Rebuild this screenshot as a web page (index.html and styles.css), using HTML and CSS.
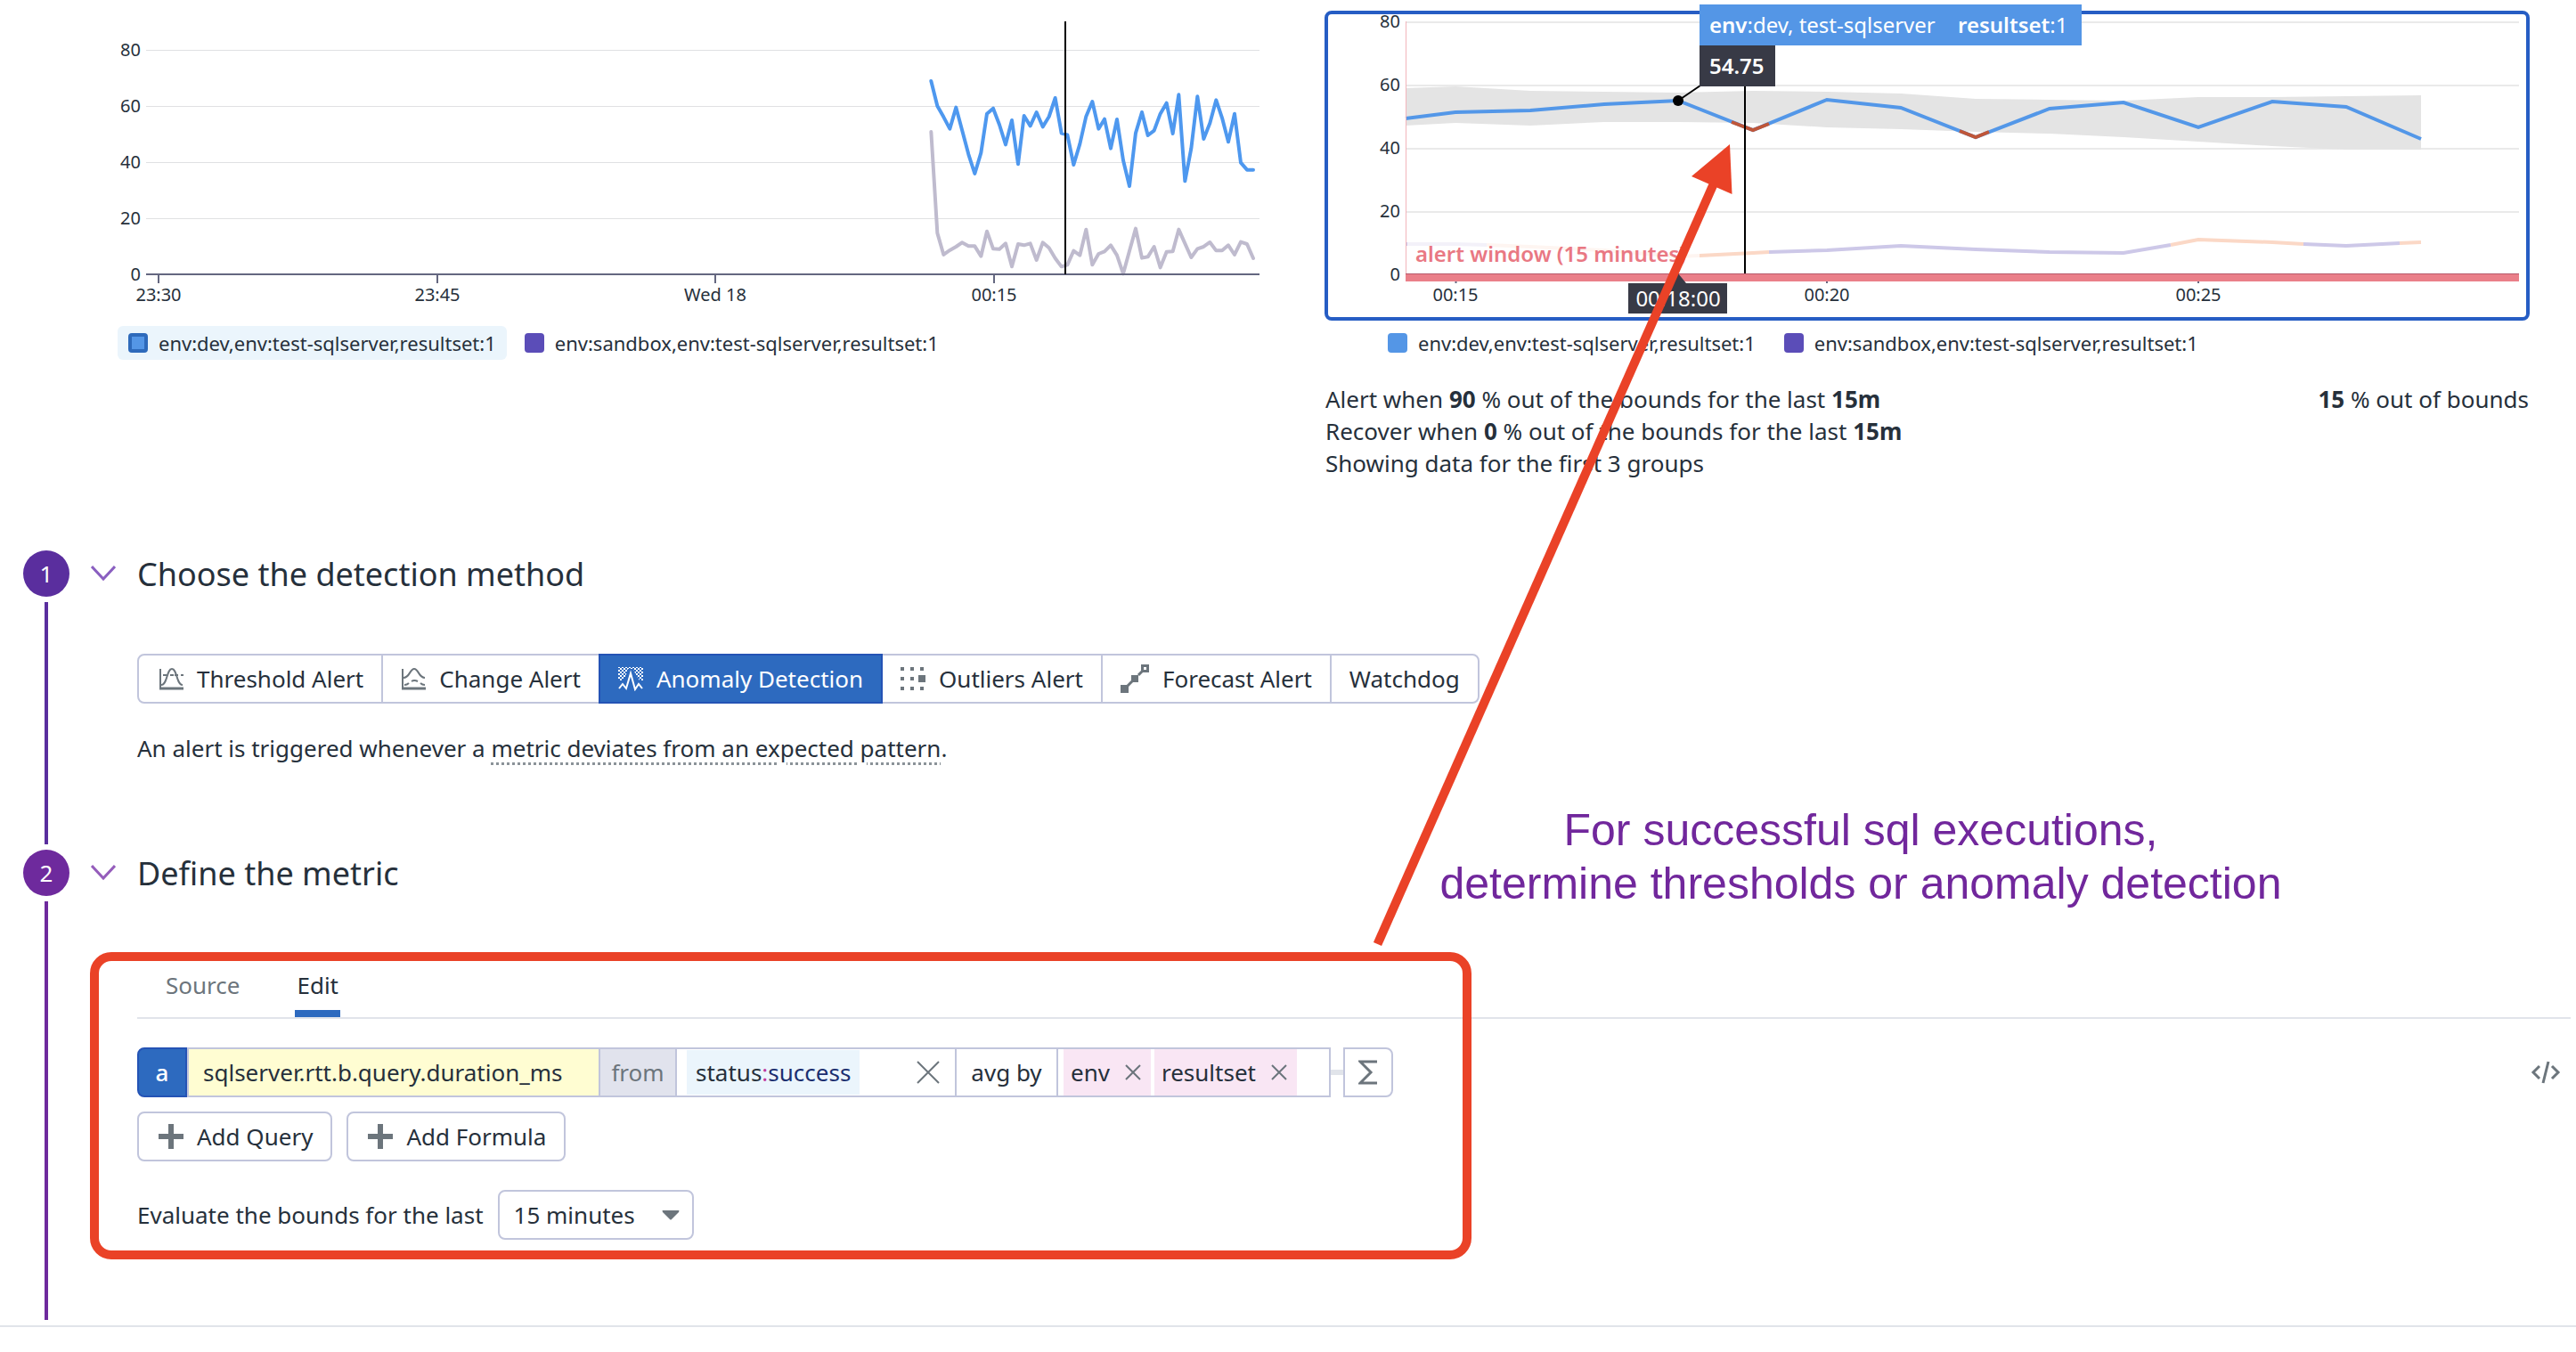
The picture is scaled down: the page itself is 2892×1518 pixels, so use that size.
FILE: index.html
```html
<!DOCTYPE html>
<html lang="en">
<head>
<meta charset="utf-8">
<title>Edit monitor</title>
<link rel="stylesheet" href="styles.css">
</head>
<body>
<main class="page">
  <section class="charts">
    <div class="chart-col">
      <svg class="chart history" viewBox="132 0 1286 366" role="img" aria-label="Query duration history">
        <g class="grid thin">
          <path d="M164 56.5H1414M164 119.5H1414M164 182.5H1414M164 245.5H1414"/>
        </g>
        <g class="lines">
          <g transform="translate(980 0) scale(.33333)">
            <polyline class="series-muted" points="196,444 217,785 238,858 259,843 280,831 300,817 322,829 343,829 364,863 384,779 405,838 426,839 447,820 468,898 489,822 509,826 530,820 551,876 572,817 593,835 614,870 635,898 655,892 676,845 697,860 718,773 739,892 760,855 780,847 801,826 822,860 843,922 864,845 885,770 906,869 926,865 947,831 968,901 989,848 1010,847 1030,773 1051,820 1072,867 1093,838 1114,831 1135,816 1156,844 1176,844 1197,826 1218,858 1239,815 1260,822 1281,870"/>
            <polyline class="series-blue" points="196,273 217,357 238,394 259,434 280,362 300,437 322,520 343,585 364,515 384,383 405,365 426,420 447,487 468,405 489,553 509,390 530,424 551,378 572,427 593,393 614,330 635,449 655,454 676,555 697,485 718,392 739,342 760,434 780,401 801,500 822,402 843,540 864,627 885,448 906,378 926,456 947,440 968,383 989,347 1010,450 1030,319 1051,610 1072,500 1093,325 1114,468 1135,415 1156,337 1176,397 1197,478 1218,383 1239,548 1260,572 1281,572"/>
          </g>
        </g>
        <path class="axis" d="M164 308H1414M178 308V318M491 308V318M803 308V318M1116 308V318"/>
        <path class="cursor" d="M1196 24V308"/>
        <g class="labels y">
          <text x="158" y="63">80</text><text x="158" y="126">60</text><text x="158" y="189">40</text><text x="158" y="252">20</text><text x="158" y="315">0</text>
        </g>
        <g class="labels x">
          <text x="178" y="338">23:30</text><text x="491" y="338">23:45</text><text x="803" y="338">Wed 18</text><text x="1116" y="338">00:15</text>
        </g>
      </svg>
      <ul class="legend">
        <li class="selected"><span class="swatch blue"></span>env:dev,env:test-sqlserver,resultset:1</li>
        <li><span class="swatch purple"></span>env:sandbox,env:test-sqlserver,resultset:1</li>
      </ul>
    </div>

    <div class="chart-col">
      <div class="panel">
        <svg class="chart" viewBox="1491 16 1345 340" role="img" aria-label="Alert window preview">
          <path class="grid thick" d="M1578 25H2828M1578 96H2828M1578 167H2828M1578 238H2828"/>
          <path class="band" d="M1578 99L1634 97 1718 102 1801 103 1884 104 1968 102 2051 103 2134 105 2218 111 2301 112 2384 113 2468 109 2551 109 2634 108 2718 107V168H2634L2551 164 2468 159 2384 154 2301 150 2218 148 2134 145 2051 143 1968 138 1884 137 1801 137 1718 141 1634 138 1578 141Z"/>
          <path class="low" d="M1578 274H1634L1669 275M1986 283L2051 281 2134 276 2218 280 2301 283 2384 284 2437 275M2586 274L2634 276 2694 273"/>
          <path class="low warn" d="M1669 275L1718 277 1801 281 1884 288 1908 287 1968 284 1986 283M2437 275L2468 269 2551 272 2586 274M2694 273L2718 272"/>
          <path class="main" d="M1578 133L1634 126 1718 124 1801 117 1884 113 1968 146 2051 112 2134 121 2218 154 2301 122 2384 115 2468 143 2551 114 2634 120 2718 156"/>
          <path class="main breach" d="M1944 137L1968 146 1986 139M2200 147L2218 154 2233 148"/>
          <rect class="veil" x="1580" y="266" width="328" height="40"/>
          <path class="window-edge" d="M1578.5 24V307"/>
          <path class="axis-nub" d="M1634.500 316V318M2051 316V318M2468 316V318"/>
          <rect class="window-bar" x="1578" y="307" width="1250" height="9"/>
          <rect class="window-line" x="1578" y="307" width="1250" height="1"/>
          <text class="window-label" x="1589" y="294">alert window (15 minutes)</text>
          <path class="cursor" d="M1959 97V307"/>
          <path class="cursor" d="M1884 113L1909 96"/>
          <circle cx="1884" cy="113" r="6"/>
          <g class="labels y">
            <text x="1572" y="31">80</text><text x="1572" y="102">60</text><text x="1572" y="173">40</text><text x="1572" y="244">20</text><text x="1572" y="315">0</text>
          </g>
          <g class="labels x">
            <text x="1634" y="338">00:15</text><text x="2051" y="338">00:20</text><text x="2468" y="338">00:25</text>
          </g>
          <rect class="tip-blue" x="1908" y="5" width="429" height="46"/>
          <path class="tip-dark" d="M1908 51H1993V97H1908ZM1828 318H1875L1884 307 1893 318H1939V352H1828Z"/>
          <g class="tip-text">
            <text x="1919" y="37"><tspan class="b">env</tspan>:dev, test-sqlserver</text>
            <text x="2198" y="37"><tspan class="b">resultset</tspan>:1</text>
            <text class="b" x="1919" y="83">54.75</text>
            <text x="1884" y="344" text-anchor="middle">00:18:00</text>
          </g>
        </svg>
      </div>
      <ul class="legend inset">
        <li><span class="swatch blue"></span>env:dev,env:test-sqlserver,resultset:1</li>
        <li><span class="swatch purple"></span>env:sandbox,env:test-sqlserver,resultset:1</li>
      </ul>
      <div class="summary">
        <div>
          <p>Alert when <b>90</b> % out of the bounds for the last <b>15m</b></p>
          <p>Recover when <b>0</b> % out of the bounds for the last <b>15m</b></p>
          <p>Showing data for the first 3 groups</p>
        </div>
        <p><b>15</b> % out of bounds</p>
      </div>
    </div>
  </section>

  <section class="step first">
    <div class="rail"><span class="num">1</span><span class="line"></span></div>
    <div class="body">
      <header>
        <svg class="chev" viewBox="0 0 28 20"><path d="M1 2L14 16 27 2"/></svg>
        <h2>Choose the detection method</h2>
      </header>
      <div class="content">
        <div class="methods">
          <button type="button"><svg class="icon" viewBox="0 0 28 28"><path class="ax" d="M2 3V24"/><path class="base" d="M1 25H28"/><path class="ln" d="M3 21C10 21 9 3 15 3S20 21 27 21"/><path class="ln" d="M5 10H9M13 10H17M18 10H22M25 10H28"/></svg>Threshold Alert</button>
          <button type="button"><svg class="icon" viewBox="0 0 28 28"><path class="ax" d="M2 3V24"/><path class="base" d="M1 25H28"/><path class="ln" d="M3 13C10 13 10 3 15 3S20 13 27 13"/><path class="ln" d="M4 21Q7 21 9 19M12 17Q15 15 19 17M22 19Q24 21 27 21"/></svg>Change Alert</button>
          <button type="button" class="on"><svg class="icon" viewBox="0 0 28 28"><defs><pattern id="chk" width="4" height="4" patternUnits="userSpaceOnUse"><path d="M0 0H2V2H0ZM2 2H4V4H2Z"/></pattern></defs><path class="chk" d="M0 1H28V16H24L20 10 17 3H11L8 12 4 16H0Z"/><path class="ln" d="M1 25L5 20 9 25 14 8 19 26 23 20 27 25"/></svg>Anomaly Detection</button>
          <button type="button"><svg class="icon fill" viewBox="0 0 28 28"><path d="M0 1H4V5H0ZM11 1H15V5H11ZM22 1H26V5H22ZM0 12H4V16H0ZM11 12H15V16H11ZM20 10H28V18H20ZM0 23H4V27H0ZM11 23H15V27H11ZM22 23H26V27H22Z"/></svg>Outliers Alert</button>
          <button type="button"><svg class="icon wide fill" viewBox="0 0 32 32"><path d="M0 23H9V32H0ZM12 12H20V20H12Z"/><path class="ln" d="M6 26L15 17M20 12L25 7"/><path class="sq" d="M24.500 1.500H30.500V7.500H24.500Z"/></svg>Forecast Alert</button>
          <button type="button">Watchdog</button>
        </div>
        <p class="desc">An alert is triggered whenever a <span class="hint">metric deviates from an expected pattern</span>.</p>
      </div>
    </div>
  </section>

  <section class="step second">
    <div class="rail"><span class="num">2</span><span class="line"></span></div>
    <div class="body">
      <header>
        <svg class="chev" viewBox="0 0 28 20"><path d="M1 2L14 16 27 2"/></svg>
        <h2>Define the metric</h2>
      </header>
      <div class="content metric">
        <nav class="tabs"><a href="#source">Source</a><a href="#edit" class="on">Edit</a></nav>
        <div class="query">
          <button type="button" class="cell letter">a</button>
          <input class="cell name" type="text" aria-label="Metric" value="sqlserver.rtt.b.query.duration_ms">
          <span class="cell from">from</span>
          <div class="cell filter"><span class="tag">status<i>:</i><em>success</em></span><button type="button" class="x" aria-label="Clear filter"><svg width="26" height="26" viewBox="0 0 26 26"><path d="M1 1L25 25M25 1L1 25"/></svg></button></div>
          <button type="button" class="cell agg">avg by</button>
          <div class="cell groups">
            <span class="group">env<button type="button" class="x" aria-label="Remove env"><svg width="18" height="18" viewBox="0 0 18 18"><path d="M1 1L17 17M17 1L1 17"/></svg></button></span>
            <span class="group">resultset<button type="button" class="x" aria-label="Remove resultset"><svg width="18" height="18" viewBox="0 0 18 18"><path d="M1 1L17 17M17 1L1 17"/></svg></button></span>
          </div>
          <span class="link"></span>
          <button type="button" class="cell sigma" aria-label="Add function"><svg width="22" height="28" viewBox="0 0 22 28"><path d="M21 2H2L14 14 2 26H21"/></svg></button>
          <button type="button" class="code" aria-label="Show source"><svg width="34" height="26" viewBox="0 0 34 26"><path d="M10 6L3 13 10 20M24 6L31 13 24 20M20 1L14 25"/></svg></button>
        </div>
        <div class="adds">
          <button type="button"><svg width="28" height="28" viewBox="0 0 28 28"><path d="M14 0V28M0 14H28"/></svg>Add Query</button>
          <button type="button"><svg width="28" height="28" viewBox="0 0 28 28"><path d="M14 0V28M0 14H28"/></svg>Add Formula</button>
        </div>
        <div class="evaluate">
          <label for="window">Evaluate the bounds for the last</label>
          <span class="select"><select id="window"><option>15 minutes</option></select><svg width="20" height="11" viewBox="0 0 20 11"><path d="M1 0H19Q20 0 19 2L11 10Q10 11 9 10L1 2Q0 0 1 0Z"/></svg></span>
        </div>
      </div>
    </div>
  </section>

  <div class="mark-box"></div>
  <svg class="mark-arrow" width="420" height="910" viewBox="1536 158 420 910"><path d="M1546.500 1060L1924 206"/><path class="head" d="M1942 162L1899 198 1944.500 218Z"/></svg>
  <p class="mark-note">For successful sql executions,<br>determine thresholds or anomaly detection</p>
</main>
</body>
</html>
```
FILE: styles.css
```css
* { box-sizing: border-box; }
body {
  margin: 0;
  background: #fff;
  color: #26303b;
  font: 26px/36px "Noto Sans", "Open Sans", sans-serif;
}
p, h2, ul { margin: 0; padding: 0; }
button, input, select { font: inherit; color: inherit; }
button { cursor: pointer; }
svg { display: block; flex: none; }

.page { position: relative; border-bottom: 2px solid #e1e4ea; }

/* charts */
.charts {
  display: grid;
  grid-template-columns: 1286fr 1353fr;
  column-gap: 69px;
  padding: 0 52px 80px 132px;
}
.chart { width: 100%; height: auto; overflow: visible; }
.panel { margin: 12px 0 6px; border: 4px solid #265dc4; border-radius: 8px; }
.grid { fill: none; stroke: #e0e1e3; stroke-width: 1; }
.grid.thick { stroke: #eaeaea; stroke-width: 2; }
.lines { fill: none; stroke-width: 12; stroke-linecap: round; stroke-linejoin: round; }
.series-muted { stroke: #bfbbce; }
.series-blue { stroke: #4e98ef; }
.axis { fill: none; stroke: #646780; stroke-width: 2; }
.axis-nub { stroke: #646780; stroke-width: 2; }
.cursor { fill: none; stroke: #000; stroke-width: 2; }
.band { fill: #e4e4e4; }
.main { fill: none; stroke: #5397e8; stroke-width: 4; }
.main.breach { stroke: #bf5639; }
.low { fill: none; stroke: #cdc8e8; stroke-width: 4; }
.low.warn { stroke: #fbd8c6; }
.veil { fill: #fff; fill-opacity: .75; }
.window-edge { stroke: #f2b5bb; stroke-width: 1; }
.window-bar { fill: #ea7f89; }
.window-line { fill: #b75a6b; }
.window-label { fill: #e97883; font-size: 24px; font-weight: 600; }
.labels { fill: #26303b; font-size: 20px; }
.labels.y { text-anchor: end; }
.labels.x { text-anchor: middle; }
.tip-blue { fill: #5496e6; }
.tip-dark { fill: #383a46; }
.tip-text { fill: #fff; font-size: 24px; }
.tip-text .b { font-weight: 600; }

.legend { display: flex; gap: 8px; list-style: none; font-size: 22px; line-height: 30px; }
.legend.inset { padding-left: 59px; }
.legend li { display: flex; align-items: center; gap: 12px; padding: 4px 12px; border-radius: 6px; }
.legend li.selected { background: #ebf5fc; }
.swatch { width: 22px; height: 22px; border-radius: 4px; }
.swatch.blue { background: #5496e6; }
.swatch.purple { background: #5b4db8; }
.selected .swatch { border: 4px solid #2e6abb; }

.summary { display: flex; justify-content: space-between; margin-top: 26px; padding: 0 1px; }

/* steps */
.step { display: grid; grid-template-columns: 52px 1fr; padding-left: 26px; }
.first { --step: #5a2e9e; --chev: #8a5fc0; }
.second { --step: #6e2a9d; --chev: #955dbb; }
.rail { display: flex; flex-direction: column; align-items: center; gap: 6px; padding-bottom: 6px; }
.num {
  width: 52px;
  height: 52px;
  border-radius: 50%;
  background: var(--step);
  color: #fff;
  line-height: 52px;
  text-align: center;
}
.line { flex: 1; width: 4px; background: var(--step); }
.body { padding-bottom: 96px; min-width: 0; }
.body header { display: flex; align-items: center; gap: 24px; height: 52px; padding-left: 24px; }
.chev { width: 28px; height: 20px; fill: none; stroke: var(--chev); stroke-width: 3; }
h2 { padding-top: 2px; font-size: 36px; line-height: 50px; font-weight: 400; }
.content { padding: 64px 6px 0 76px; }
.content.metric { padding-top: 82px; }

.methods { display: flex; }
.methods button {
  display: flex;
  align-items: center;
  gap: 15px;
  height: 56px;
  padding: 0 20px;
  margin-left: -2px;
  border: 2px solid #c1c5dc;
  background: #fff;
}
.methods button:first-child { margin-left: 0; padding-left: 22px; border-radius: 8px 0 0 8px; }
.methods button:last-child { border-radius: 0 8px 8px 0; }
.methods button.on { position: relative; background: #2d6abf; border-color: #2453b5; color: #fff; }
.icon { width: 28px; height: 28px; fill: none; stroke: #6c757c; stroke-width: 2; }
.icon .ln { fill: none; stroke-width: 2; }
.icon .base { stroke-width: 3; }
.icon.fill { fill: #6c757c; stroke: none; }
.icon.wide { width: 32px; height: 52px; }
.icon.fill .ln { stroke: #6c757c; stroke-width: 3; }
.icon .sq { fill: #fff; stroke: #6c757c; stroke-width: 3; }
.on .icon { stroke: #fff; }
.on .icon pattern path { fill: #fff; stroke: none; }
.on .icon .chk { fill: url(#chk); stroke: none; }
.desc { margin-top: 32px; }
.hint {
  text-decoration: underline dotted #8b9298 3px;
  text-underline-offset: 6px;
}

.tabs { display: flex; gap: 60px; padding-left: 30px; border-bottom: 2px solid #e1e4ea; }
.tabs a { padding: 0 2px 10px; border-bottom: 8px solid transparent; color: #6c757c; text-decoration: none; }
.tabs a.on { color: #26303b; border-color: #2d6abf; }

.query { display: flex; align-items: center; margin-top: 32px; }
.cell {
  display: flex;
  align-items: center;
  flex: none;
  height: 56px;
  margin: 0 0 0 -2px;
  padding: 0;
  border: 2px solid #c1c5dc;
  border-radius: 0;
  background: #fff;
}
.letter {
  justify-content: center;
  width: 56px;
  margin: 0;
  border-color: #2453b5;
  border-radius: 8px 0 0 8px;
  background: #2d6abf;
  color: #fff;
  font-weight: 500;
}
.name { width: 464px; margin: 0; padding: 0 16px; background: #fffdd2; }
.from { justify-content: center; width: 88px; background: #e1e3ed; color: #6c757c; }
.filter { justify-content: space-between; width: 316px; padding: 0 17px 0 11px; }
.tag { padding: 7px 10px; background: #ebf5fc; }
.tag i { color: #c0399f; font-style: normal; }
.tag em { color: #1b2f70; font-style: normal; }
.agg { justify-content: center; width: 116px; }
.groups { gap: 4px; width: 308px; padding-left: 6px; }
.group { display: flex; align-items: center; gap: 17px; height: 52px; padding: 0 11px 0 8px; background: #f9e6f4; }
.x { padding: 0; border: 0; background: none; }
.x path, .sigma path, .code path { fill: none; stroke: #6c757c; stroke-width: 2; }
.link { width: 14px; height: 6px; background: #e1e4ea; }
.sigma { justify-content: center; width: 56px; margin: 0; border-radius: 0 8px 8px 0; }
.sigma path { stroke-width: 3; }
.code { margin-left: auto; padding: 0 11px; border: 0; background: none; }
.code path { stroke-width: 3; }

.adds { display: flex; gap: 16px; margin-top: 16px; }
.adds button {
  display: flex;
  align-items: center;
  gap: 15px;
  height: 56px;
  padding: 0 20px 0 22px;
  border: 2px solid #c1c5dc;
  border-radius: 8px;
  background: #fff;
}
.adds path { stroke: #6c757c; stroke-width: 6; }

.evaluate { display: flex; align-items: center; gap: 16px; margin-top: 32px; }
.select { display: grid; align-items: center; }
.select > * { grid-area: 1 / 1; }
.select select {
  width: 220px;
  height: 56px;
  padding: 0 16px;
  border: 2px solid #c1c5dc;
  border-radius: 8px;
  background: #fff;
  appearance: none;
}
.select svg { justify-self: end; margin-right: 16px; fill: #6c757c; pointer-events: none; }

/* annotations drawn over the page */
.mark-box {
  position: absolute;
  left: 101px;
  top: 1069px;
  width: 1551px;
  height: 345px;
  border: 10px solid #ea4227;
  border-radius: 24px;
  pointer-events: none;
}
.mark-arrow { position: absolute; left: 1536px; top: 158px; fill: none; stroke: #ea4227; stroke-width: 10; pointer-events: none; }
.mark-arrow .head { fill: #ea4227; stroke: none; }
.mark-note {
  position: absolute;
  left: 1589px;
  top: 902px;
  width: 1000px;
  color: #71279c;
  font: 50px/60px "Liberation Sans", Arial, sans-serif;
  text-align: center;
  white-space: nowrap;
}
```
